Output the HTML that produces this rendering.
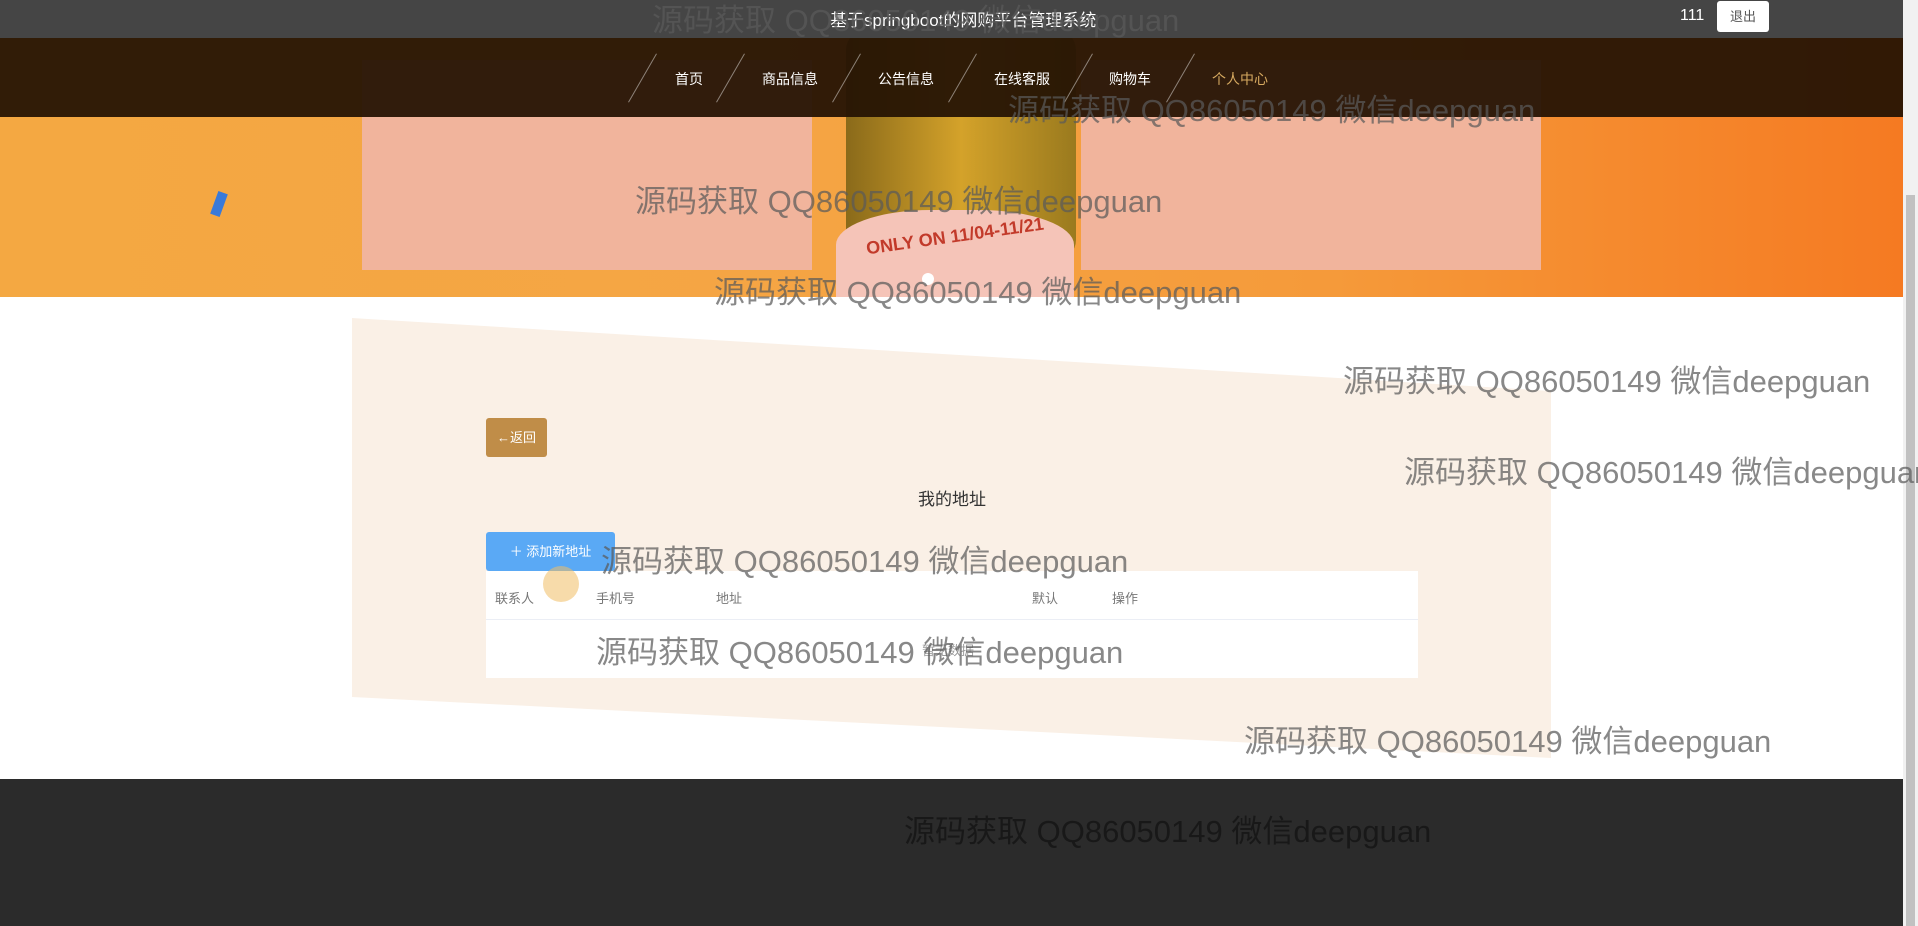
<!DOCTYPE html>
<html><head><meta charset="utf-8"><style>
*{margin:0;padding:0;box-sizing:border-box}
body{width:1918px;height:926px;overflow:hidden;position:relative;background:#fff;font-family:"Liberation Sans","Noto Sans CJK SC",sans-serif}
.abs{position:absolute}
.wm{position:absolute;font-size:31px;color:rgba(90,90,90,.72);white-space:nowrap;z-index:50;font-family:"Liberation Sans","Noto Sans CJK SC",sans-serif;margin-top:-8px}
.nav a{position:absolute;top:69px;color:#fff;font-size:14px;transform:translateX(-50%);white-space:nowrap}
.sl{position:absolute;top:50px;width:1px;height:56px;background:rgba(255,255,255,.45);transform:rotate(30deg)}
</style></head><body>
<div class="abs" style="left:0;top:0;width:1903px;height:297px;background:linear-gradient(90deg,#f4a842 0%,#f5a544 40%,#f59a3a 70%,#f57a22 100%)"></div>
<div class="abs" style="left:362px;top:60px;width:450px;height:210px;background:#f1b49c"></div>
<div class="abs" style="left:1081px;top:60px;width:460px;height:210px;background:#f1b49c"></div>
<div class="abs" style="left:846px;top:30px;width:230px;height:230px;background:linear-gradient(90deg,#8a6a1a,#d4a22a,#9a7a1e);border-radius:20px"></div>
<div class="abs" style="left:836px;top:210px;width:238px;height:87px;background:#f5c4b8;border-radius:40% 40% 0 0"></div>
<div class="abs" style="left:840px;top:226px;width:230px;text-align:center;color:#c23a2a;font-size:18px;font-weight:bold;transform:rotate(-8deg)">ONLY ON 11/04-11/21</div>
<div class="abs" style="left:214px;top:192px;width:10px;height:24px;background:#3a7ad8;transform:rotate(20deg)"></div>
<div class="abs" style="left:922px;top:273px;width:12px;height:12px;border-radius:50%;background:#fff"></div>
<div class="abs" style="left:0;top:0;width:1903px;height:38px;background:#454545"></div>
<div class="abs" style="left:0;top:38px;width:1903px;height:79px;background:rgba(38,20,4,.95)"></div>
<div class="abs" style="left:830px;top:6px;color:#fff;font-size:17px">基于springboot的网购平台管理系统</div>
<div class="abs" style="left:1680px;top:7px;color:#fff;font-size:16px">111</div>
<div class="abs" style="left:1717px;top:1px;width:52px;height:31px;background:#fff;border-radius:3px;color:#555;font-size:13px;text-align:center;line-height:31px">退出</div>
<div class="nav">
<div class="sl" style="left:642px"></div><a style="left:689px">首页</a>
<div class="sl" style="left:730px"></div><a style="left:790px">商品信息</a>
<div class="sl" style="left:846px"></div><a style="left:906px">公告信息</a>
<div class="sl" style="left:962px"></div><a style="left:1022px">在线客服</a>
<div class="sl" style="left:1078px"></div><a style="left:1130px">购物车</a>
<div class="sl" style="left:1180px"></div><a style="left:1240px;color:#d6a960">个人中心</a>
</div>
<svg class="abs" style="left:0;top:0" width="1918" height="926"><polygon points="352,318 1551,391 1551,758 352,697" fill="#faf0e6"/></svg>
<div class="abs" style="left:486px;top:418px;width:61px;height:39px;background:#c08d48;border-radius:3px;color:#fff;font-size:13px;text-align:center;line-height:39px">←返回</div>
<div class="abs" style="left:852px;top:485px;width:200px;text-align:center;font-size:17px;color:#333">我的地址</div>
<div class="abs" style="left:486px;top:532px;width:129px;height:39px;background:#5aa9f5;border-radius:3px;color:#fff;font-size:13px;text-align:center;line-height:39px">＋ 添加新地址</div>
<div class="abs" style="left:486px;top:571px;width:932px;height:107px;background:#fff"></div>
<div class="abs" style="left:486px;top:619px;width:932px;height:1px;background:#ebeef5"></div>
<div class="abs" style="top:588px;left:495px;font-size:13px;color:#777">联系人</div>
<div class="abs" style="top:588px;left:596px;font-size:13px;color:#777">手机号</div>
<div class="abs" style="top:588px;left:716px;font-size:13px;color:#777">地址</div>
<div class="abs" style="top:588px;left:1032px;font-size:13px;color:#777">默认</div>
<div class="abs" style="top:588px;left:1112px;font-size:13px;color:#777">操作</div>
<div class="abs" style="top:640px;left:922px;font-size:13px;color:#999">暂无数据</div>
<div class="abs" style="left:543px;top:566px;width:36px;height:36px;border-radius:50%;background:rgba(240,190,100,.55)"></div>
<div class="abs" style="left:0;top:779px;width:1903px;height:147px;background:#2b2b2b"></div>
<div class="abs" style="left:1903px;top:0;width:15px;height:926px;background:#f1f1f1"></div>
<div class="abs" style="left:1906px;top:195px;width:9px;height:731px;background:#c1c1c1"></div>
<div class="wm" style="left:652px;top:3px">源码获取 QQ86050149 微信deepguan</div>
<div class="wm" style="left:1008px;top:93px">源码获取 QQ86050149 微信deepguan</div>
<div class="wm" style="left:635px;top:184px">源码获取 QQ86050149 微信deepguan</div>
<div class="wm" style="left:714px;top:275px">源码获取 QQ86050149 微信deepguan</div>
<div class="wm" style="left:1343px;top:364px">源码获取 QQ86050149 微信deepguan</div>
<div class="wm" style="left:1404px;top:455px">源码获取 QQ86050149 微信deepguan</div>
<div class="wm" style="left:601px;top:544px">源码获取 QQ86050149 微信deepguan</div>
<div class="wm" style="left:596px;top:635px">源码获取 QQ86050149 微信deepguan</div>
<div class="wm" style="left:1244px;top:724px">源码获取 QQ86050149 微信deepguan</div>
<div class="wm" style="left:904px;top:814px;color:rgba(20,20,20,.8)">源码获取 QQ86050149 微信deepguan</div>
</body></html>
